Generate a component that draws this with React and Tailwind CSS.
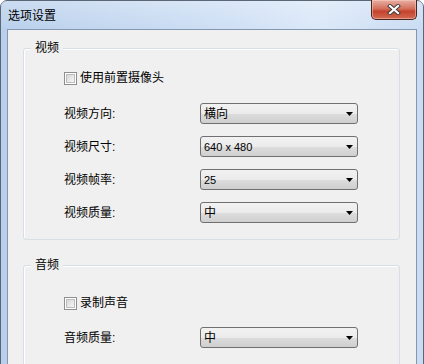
const font = { fontFamily: '"Liberation Sans", "Noto Sans CJK SC", sans-serif' };

const Checkbox = ({ label }) => (
  <div className="flex items-center h-[16px] gap-[3px]">
    <span className="w-[13px] h-[13px] border border-[#8e8f8f] bg-white p-px">
      <span className="block w-full h-full border border-[#bcbcbc] bg-gradient-to-br from-[#d8d8d8] to-[#f6f6f6]" />
    </span>
    <span className="text-[12px] leading-[16px] text-black">{label}</span>
  </div>
);

const Select = ({ value, cjk }) => (
  <div className="w-[158px] h-[21px] flex items-center justify-between rounded-[3px] border border-[#707070] pl-[3px] pr-[3px] bg-[linear-gradient(to_bottom,#f2f2f2_0%,#ebebeb_50%,#dddddd_51%,#cfcfcf_100%)]">
    <span className={cjk ? 'text-[12px] leading-[16px] text-black' : 'text-[11px] leading-[16px] text-black'}>{value}</span>
    <svg width="7" height="4" viewBox="0 0 7 4" className="mr-px">
      <polygon points="0,0 7,0 3.5,4" fill="#000" />
    </svg>
  </div>
);

const Row = ({ label, value, cjk }) => (
  <div className="flex items-center h-[21px]">
    <span className="w-[136px] text-[12px] leading-[16px] text-black">{label}</span>
    <Select value={value} cjk={cjk} />
  </div>
);

const Group = ({ title, className, children }) => (
  <div className={`relative ml-[15px] mr-[16px] rounded-[3px] border border-[#d5dfe5] shadow-[inset_1px_1px_0_#ffffff] pl-[40px] ${className}`}>
    <span className="absolute -top-[9px] left-[7px] bg-[#f0f0f0] px-[4px] text-[12px] leading-[16px] text-black">{title}</span>
    {children}
  </div>
);

const CloseButton = () => (
  <div className="-mt-px w-[46px] h-[20px] flex items-center justify-center rounded-b-[5px] border border-t-0 border-[#4a2520] bg-[linear-gradient(to_bottom,#e8b0a4_0%,#d4705c_45%,#c4432d_60%,#d26a52_100%)] shadow-[inset_0_0_0_1px_rgba(255,210,200,0.5)]">
    <svg width="14" height="11" viewBox="0 0 14 11">
      <path d="M3 2 L11 9 M11 2 L3 9" stroke="#3b3b3b" strokeWidth="4" strokeLinecap="square" />
      <path d="M3 2 L11 9 M11 2 L3 9" stroke="#ffffff" strokeWidth="2.2" strokeLinecap="square" />
    </svg>
  </div>
);

export default function App() {
  return (
    <div style={font} className="w-[424px] h-[364px] overflow-hidden">
      <div className="w-[424px] h-[376px] flex flex-col rounded-t-[7px] border border-[#5b6677] bg-[linear-gradient(to_right,#b9d0ec_0%,#cfe0f5_55%,#dbe8f8_75%,#c9dcf3_100%)]">
        <div className="h-[28px] shrink-0 flex items-start justify-between pl-[7px] pr-[6px] bg-[linear-gradient(to_bottom,rgba(255,255,255,0.25),rgba(255,255,255,0))]">
          <span className="mt-[7px] text-[12px] leading-[16px] text-black">选项设置</span>
          <CloseButton />
        </div>
        <div className="h-[346px] px-[6px]">
          <div className="h-[346px] border border-[#8496b0] bg-[#f0f0f0] pt-[18px]">
            <Group title="视频" className="h-[192px] pt-[21px]">
              <Checkbox label="使用前置摄像头" />
              <div className="mt-[17px] flex flex-col gap-[12px]">
                <Row label="视频方向:" value="横向" cjk />
                <Row label="视频尺寸:" value="640 x 480" />
                <Row label="视频帧率:" value="25" />
                <Row label="视频质量:" value="中" cjk />
              </div>
            </Group>
            <Group title="音频" className="mt-[25px] h-[120px] pt-[29px]">
              <Checkbox label="录制声音" />
              <div className="mt-[16px]">
                <Row label="音频质量:" value="中" cjk />
              </div>
            </Group>
          </div>
        </div>
      </div>
    </div>
  );
}
